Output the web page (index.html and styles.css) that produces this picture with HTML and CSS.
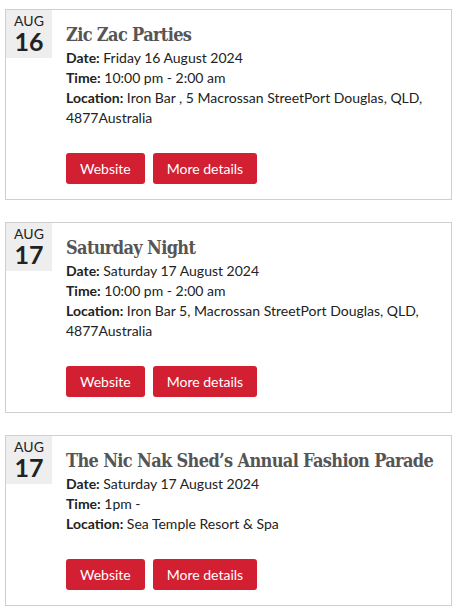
FILE: index.html
```html
<!DOCTYPE html>
<html lang="en">
<head>
    <meta charset="UTF-8">
    <meta name="viewport" content="width=device-width, initial-scale=1.0">
    <title>Events</title>
    <link rel="stylesheet" href="styles.css">
</head>
<body>
    <div class="event-list">
        <!-- Event 1 -->
        <div class="event">
            <div class="event-date">
                <span class="month">Aug</span>
                <span class="day">16</span>
            </div>
            <div class="event-body">
                <h3 class="event-title">Zic Zac Parties</h3>
                <p><strong>Date:</strong> Friday 16 August 2024</p>
                <p><strong>Time:</strong> 10:00 pm - 2:00 am</p>
                <p><strong>Location:</strong> Iron Bar , 5 Macrossan StreetPort Douglas, QLD, 4877Australia</p>
                <div class="event-actions">
                    <a href="#" class="btn">Website</a>
                    <a href="#" class="btn">More details</a>
                </div>
            </div>
        </div>

        <!-- Event 2 -->
        <div class="event">
            <div class="event-date">
                <span class="month">Aug</span>
                <span class="day">17</span>
            </div>
            <div class="event-body">
                <h3 class="event-title">Saturday Night</h3>
                <p><strong>Date:</strong> Saturday 17 August 2024</p>
                <p><strong>Time:</strong> 10:00 pm - 2:00 am</p>
                <p><strong>Location:</strong> Iron Bar 5, Macrossan StreetPort Douglas, QLD, 4877Australia</p>
                <div class="event-actions">
                    <a href="#" class="btn">Website</a>
                    <a href="#" class="btn">More details</a>
                </div>
            </div>
        </div>

        <!-- Event 3 -->
        <div class="event">
            <div class="event-date">
                <span class="month">Aug</span>
                <span class="day">17</span>
            </div>
            <div class="event-body">
                <h3 class="event-title">The Nic Nak Shed&#8217;s Annual Fashion Parade</h3>
                <p><strong>Date:</strong> Saturday 17 August 2024</p>
                <p><strong>Time:</strong> 1pm -</p>
                <p><strong>Location:</strong> Sea Temple Resort &amp; Spa</p>
                <div class="event-actions">
                    <a href="#" class="btn">Website</a>
                    <a href="#" class="btn">More details</a>
                </div>
            </div>
        </div>
    </div>
</body>
</html>
```

FILE: styles.css
```css
body {
    margin: 0;
    padding: 9px 4px 0 5px;
    font-family: Lato, "Open Sans", sans-serif;
    font-size: 14px;
    line-height: 20px;
    color: #222;
    background-color: #fff;
}
.event-list {
    display: flex;
    flex-direction: column;
    gap: 22px;
}
.event {
    display: flex;
    gap: 14px;
    border: 1px solid #cfcfcf;
    padding-bottom: 15px;
}
.event-date {
    flex: 0 0 46px;
    height: 48px;
    background-color: #eeeeee; /* light gray date tab */
    display: flex;
    flex-direction: column;
    align-items: center;
    text-align: center;
}
.event-date .month {
    text-transform: uppercase;
    font-size: 14px;
    line-height: 16px;
    padding-top: 3px;
}
.event-date .day {
    font-size: 25px;
    font-weight: 700;
    line-height: 24px;
}
.event-body {
    flex: 1;
    padding-top: 13px;
}
.event-title {
    margin: 0 0 1px;
    font-family: "DejaVu Serif Condensed", "DejaVu Serif", serif;
    font-stretch: condensed;
    font-size: 18px;
    line-height: 24px;
    font-weight: 700;
    color: #555;
    letter-spacing: -0.65px;
    white-space: nowrap;
}
.event-body p {
    margin: 0;
}
.event-body strong {
    font-weight: 700;
}
.event-actions {
    display: flex;
    gap: 8px;
    margin-top: 25px;
}
.btn {
    display: inline-block;
    background-color: #d21f32; /* red buttons */
    color: white;
    text-decoration: none;
    padding: 0 14px;
    height: 31px;
    line-height: 31px;
    border-radius: 3px;
    font-size: 14px;
}
```
